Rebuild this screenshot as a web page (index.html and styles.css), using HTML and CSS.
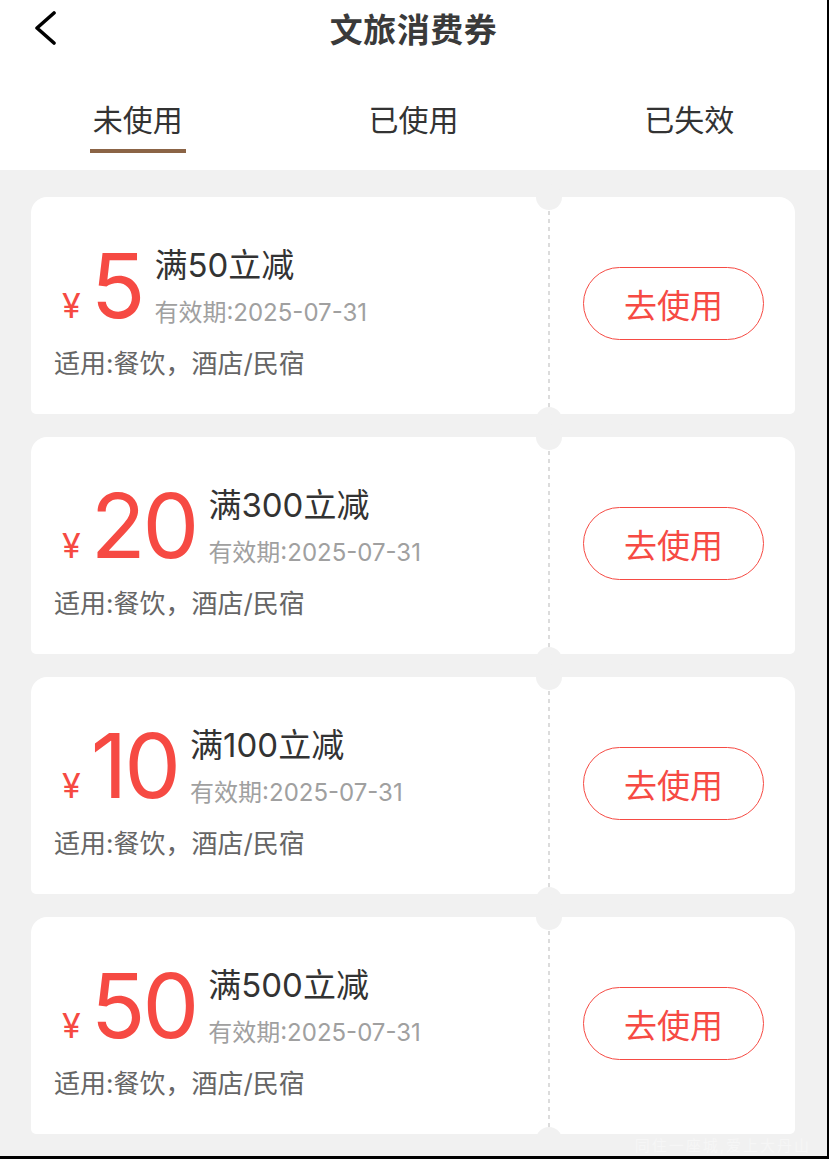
FILE: index.html
```html
<!DOCTYPE html>
<html lang="zh-CN">
<head>
  <meta charset="UTF-8">
  <meta name="viewport" content="width=device-width, initial-scale=1.0">
  <title>文旅消费券</title>
  <link rel="stylesheet" href="styles.css">
</head>
<body>
  <div class="page">
    <div class="header">
      <div class="nav">
        <a class="nav-back" href="#">
          <svg width="24" height="38" viewBox="0 0 24 38">
            <polyline points="19,2 2,17 19,32" fill="none" stroke="#000" stroke-width="3.6" stroke-linecap="round" stroke-linejoin="round"/>
          </svg>
        </a>
        <h1 class="nav-title">文旅消费券</h1>
        <span></span>
      </div>
      <div class="tabs">
        <div class="tab active">未使用</div>
        <div class="tab">已使用</div>
        <div class="tab">已失效</div>
      </div>
    </div>

    <div class="coupon-list">
      <div class="coupon">
        <div class="coupon-left">
          <div class="coupon-head">
            <div class="amount"><span class="yen">¥</span>5</div>
            <div class="info">
              <div class="info-title">满50立减</div>
              <div class="info-date">有效期:2025-07-31</div>
            </div>
          </div>
          <div class="coupon-scope">适用:餐饮，酒店/民宿</div>
        </div>
        <div class="coupon-right">
          <button class="use-btn">去使用</button>
        </div>
      </div>

      <div class="coupon">
        <div class="coupon-left">
          <div class="coupon-head">
            <div class="amount"><span class="yen">¥</span>20</div>
            <div class="info">
              <div class="info-title">满300立减</div>
              <div class="info-date">有效期:2025-07-31</div>
            </div>
          </div>
          <div class="coupon-scope">适用:餐饮，酒店/民宿</div>
        </div>
        <div class="coupon-right">
          <button class="use-btn">去使用</button>
        </div>
      </div>

      <div class="coupon">
        <div class="coupon-left">
          <div class="coupon-head">
            <div class="amount"><span class="yen">¥</span>10</div>
            <div class="info">
              <div class="info-title">满100立减</div>
              <div class="info-date">有效期:2025-07-31</div>
            </div>
          </div>
          <div class="coupon-scope">适用:餐饮，酒店/民宿</div>
        </div>
        <div class="coupon-right">
          <button class="use-btn">去使用</button>
        </div>
      </div>

      <div class="coupon">
        <div class="coupon-left">
          <div class="coupon-head">
            <div class="amount"><span class="yen">¥</span>50</div>
            <div class="info">
              <div class="info-title">满500立减</div>
              <div class="info-date">有效期:2025-07-31</div>
            </div>
          </div>
          <div class="coupon-scope">适用:餐饮，酒店/民宿</div>
        </div>
        <div class="coupon-right">
          <button class="use-btn">去使用</button>
        </div>
      </div>
    </div>

    <div class="watermark">同住一座城,爱上大丹山</div>
  </div>
</body>
</html>
```

FILE: styles.css
```css
body {
  margin: 0;
  padding: 0;
  background-color: #000;
  font-family: Inter, "Noto Sans CJK SC", sans-serif;
  color: #333;
}

.page {
  position: relative;
  width: 827px;
  height: 1156px;
  overflow: hidden;
  background-color: #f1f1f1;
}

.header {
  background-color: #fff;
  height: 170px;
}

.nav {
  display: grid;
  grid-template-columns: 1fr auto 1fr;
  align-items: center;
  height: 60px;
}

.nav-back {
  display: flex;
  align-items: center;
  padding-left: 35px;
  height: 60px;
}

.nav-title {
  margin: 0;
  font-size: 33px;
  font-weight: 600;
  line-height: 60px;
  color: #3a3a3a;
  letter-spacing: 0.5px;
}

.tabs {
  display: flex;
}

.tab {
  flex: 1;
  display: flex;
  flex-direction: column;
  align-items: center;
  padding-top: 40px;
  font-size: 30px;
  line-height: 40px;
  color: #333;
}

.tab::after {
  content: "";
  width: 96px;
  height: 4px;
  margin-top: 9px;
}

.tab.active::after {
  background-color: #8b6446;
}

.coupon-list {
  display: flex;
  flex-direction: column;
  gap: 23px;
  padding: 27px 32px 0 31px;
}

.coupon {
  display: flex;
  height: 217px;
  background-color: #fff;
  border-radius: 16px 16px 5px 5px;
}

.coupon-left {
  width: 517px;
  padding: 44px 0 0 23px;
  box-sizing: border-box;
}

.coupon-head {
  display: flex;
  align-items: center;
  height: 90px;
  margin-left: 8px;
}

.amount {
  display: flex;
  align-items: baseline;
  font-size: 90px;
  line-height: 90px;
  letter-spacing: -3px;
  color: #f64a43;
}

.yen {
  font-size: 34px;
  line-height: 34px;
  letter-spacing: 0;
  margin-right: 10px;
}

.info {
  margin-left: 12px;
}

.info-title {
  font-size: 33px;
  line-height: 40px;
  color: #333;
}

.info-date {
  margin-top: 13px;
  font-size: 24px;
  line-height: 30px;
  color: #a0a0a0;
}

.coupon-scope {
  margin-top: 16px;
  font-size: 26px;
  line-height: 34px;
  color: #666;
}

.coupon-right {
  position: relative;
  flex: 1;
  display: flex;
  align-items: center;
  justify-content: center;
  padding: 0 0 4px 4px;
  background-image: linear-gradient(#dcdcdc 55%, transparent 55%);
  background-size: 2px 8px;
  background-repeat: repeat-y;
  background-position: 0 14px;
}

.coupon-right::before,
.coupon-right::after {
  content: "";
  position: absolute;
  left: -12px;
  width: 26px;
  height: 26px;
  border-radius: 50%;
  background-color: #f1f1f1;
}

.coupon-right::before {
  top: -13px;
}

.coupon-right::after {
  bottom: -19px;
}

.use-btn {
  width: 181px;
  height: 73px;
  border: 1px solid #f64a43;
  border-radius: 37px;
  background-color: #fff;
  color: #f64a43;
  font-family: Inter, "Noto Sans CJK SC", sans-serif;
  font-size: 33px;
  cursor: pointer;
}

.watermark {
  position: absolute;
  right: 16px;
  bottom: 0;
  font-size: 15px;
  line-height: 20px;
  letter-spacing: 2px;
  color: #f6f6f6;
}
```
